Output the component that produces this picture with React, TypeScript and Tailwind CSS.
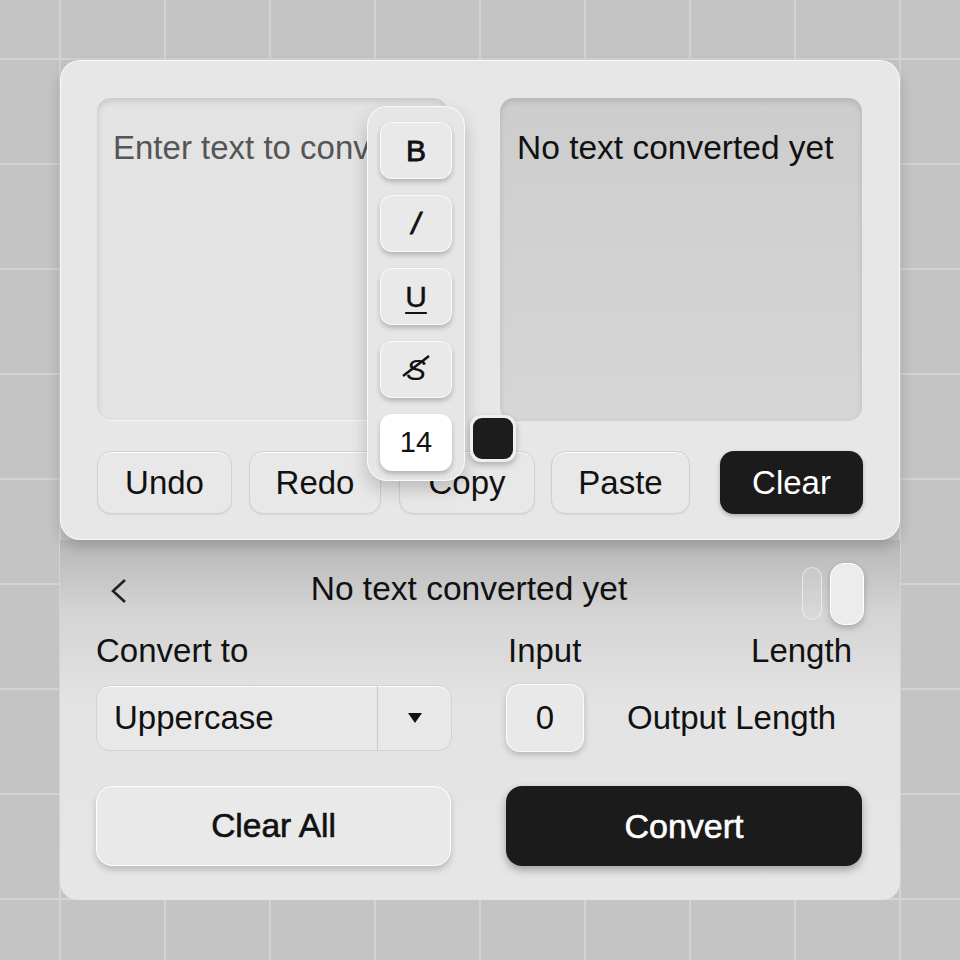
import { useState } from 'react';

const FONT = { fontFamily: '"Liberation Sans", Arial, sans-serif' };

const ACTIONS = [
  { label: 'Undo', w: 'w-[135px]', ml: 'ml-0' },
  { label: 'Redo', w: 'w-[132px]', ml: 'ml-[17px]' },
  { label: 'Copy', w: 'w-[136px]', ml: 'ml-[18px]' },
  { label: 'Paste', w: 'w-[139px]', ml: 'ml-[16px]' },
];

function ToolButton({ children, active }: { children: React.ReactNode; active?: boolean }) {
  return (
    <button
      className={
        'relative flex h-[57px] w-[72px] items-center justify-center rounded-[12px] border border-white/80 text-[30px] text-[#111] shadow-[0_3px_5px_rgba(0,0,0,0.22)] ' +
        (active ? 'bg-white' : 'bg-[#e9e9e9]')
      }
    >
      {children}
    </button>
  );
}

export default function App() {
  const [on, setOn] = useState(true);
  const [mode] = useState('Uppercase');

  return (
    <div
      style={FONT}
      className="h-[960px] w-[960px] overflow-hidden bg-[#c4c4c4] bg-[linear-gradient(to_right,#d3d3d3_2px,transparent_2px),linear-gradient(to_bottom,#d3d3d3_2px,transparent_2px)] bg-[size:105px_105px] bg-[position:59px_58px] px-[60px] pt-[60px]"
    >
      <div className="w-[840px]">
        {/* editor card */}
        <div className="relative z-10 h-[480px] rounded-[20px] border border-white/70 bg-[#e7e7e7] px-[36px] pt-[37px] shadow-[0_6px_14px_rgba(0,0,0,0.18)]">
          <div className="flex gap-[53px]">
            <div className="h-[323px] w-[350px] rounded-[14px] bg-[#e3e3e3] pl-[16px] pt-[30px] text-[33px] leading-[1.2] text-[#555] shadow-[inset_0_3px_6px_rgba(0,0,0,0.13),inset_0_-1px_0_rgba(255,255,255,0.8)]">
              <div className="whitespace-nowrap">Enter text to conv</div>
            </div>
            <div className="h-[323px] w-[362px] rounded-[14px] bg-[linear-gradient(to_bottom,#cdcdcd,#d6d6d6)] pl-[17px] pt-[30px] text-[33.5px] leading-[1.2] text-[#111] shadow-[inset_0_3px_6px_rgba(0,0,0,0.12)]">
              No text converted yet
            </div>
          </div>

          <div className="mt-[30px] flex">
            {ACTIONS.map((a) => (
              <button
                key={a.label}
                className={`${a.w} ${a.ml} h-[63px] rounded-[14px] border-[1.5px] border-[#d0d0d0] bg-[#e8e8e8] text-[33px] text-[#111] shadow-[inset_0_1px_0_rgba(255,255,255,0.9),0_1px_2px_rgba(0,0,0,0.06)]`}
              >
                {a.label}
              </button>
            ))}
            <button className="ml-[30px] h-[63px] w-[143px] rounded-[14px] bg-[#1b1b1b] text-[33px] text-white shadow-[0_2px_4px_rgba(0,0,0,0.25)]">
              Clear
            </button>
          </div>

          {/* floating format toolbar */}
          <div className="absolute left-[306px] top-[45px] flex h-[375px] w-[98px] flex-col gap-[16px] rounded-[20px] border border-white/80 bg-[#e6e6e6] pl-[12px] pt-[15px] shadow-[0_8px_18px_rgba(0,0,0,0.2)]">
            <ToolButton>
              <span className="[-webkit-text-stroke:0.8px_#111]">B</span>
            </ToolButton>
            <ToolButton>
              <span className="italic [-webkit-text-stroke:0.8px_#111]">/</span>
            </ToolButton>
            <ToolButton>
              <span className="underline decoration-2 underline-offset-[5px] [-webkit-text-stroke:0.4px_#111]">U</span>
            </ToolButton>
            <ToolButton>
              <span className="relative italic">
                S
                <svg className="absolute left-[-6px] top-[6px]" width="32" height="26" viewBox="0 0 32 26">
                  <line x1="3" y1="23" x2="29" y2="3" stroke="#111" strokeWidth="2.5" />
                </svg>
              </span>
            </ToolButton>
            <ToolButton active>
              <span className="text-[29px]">14</span>
            </ToolButton>
          </div>

          {/* colour swatch */}
          <div className="absolute left-[409px] top-[354px] h-[47px] w-[46px] rounded-[11px] bg-[#efefef] p-[3px] shadow-[0_3px_6px_rgba(0,0,0,0.25)]">
            <div className="h-full w-full rounded-[9px] bg-[#1c1c1c]" />
          </div>
        </div>

        {/* settings panel */}
        <div className="h-[360px] rounded-b-[18px] bg-[linear-gradient(to_bottom,#b7b7b7_0%,#d4d4d4_20%,#e3e3e3_45%,#e6e6e6_100%)] px-[36px] pt-[22px] text-[#111]">
          <div className="flex h-[63px] items-center">
            <svg className="ml-[14px] -mt-[6px]" width="18" height="26" viewBox="0 0 18 26">
              <polyline points="15,2 3,13 15,24" fill="none" stroke="#222" strokeWidth="2.6" strokeLinejoin="miter" />
            </svg>
            <div className="-mt-[9px] flex-1 pl-[12px] text-center text-[33.5px] leading-none">No text converted yet</div>
            <button
              onClick={() => setOn(!on)}
              className="flex h-[63px] w-[66px] items-center justify-between"
            >
              <span className="ml-[4px] h-[53px] w-[20px] rounded-[10px] border border-white/50 bg-white/10" />
              <span
                className={
                  'h-[62px] w-[34px] rounded-[14px] border border-white bg-[#ececec] shadow-[0_3px_6px_rgba(0,0,0,0.22)] ' +
                  (on ? '' : 'opacity-60')
                }
              />
            </button>
          </div>

          <div className="mt-[7px] flex h-[38px] items-center text-[33px]">
            <div className="w-[412px]">Convert to</div>
            <div className="flex flex-1 justify-between pr-[12px]">
              <span>Input</span>
              <span>Length</span>
            </div>
          </div>

          <div className="mt-[14px] flex items-center">
            <div className="flex h-[66px] w-[356px] items-center rounded-[14px] border-[1.5px] border-[#d2d2d2] bg-[#e8e8e8] shadow-[inset_0_1px_0_rgba(255,255,255,0.9)]">
              <span className="flex-1 pl-[17px] text-[33px]">{mode}</span>
              <span className="flex h-full w-[74px] items-center justify-center border-l border-[#cacaca]">
                <svg width="16" height="12" viewBox="0 0 16 12">
                  <polygon points="1,1 15,1 8,11" fill="#111" />
                </svg>
              </span>
            </div>
            <div className="ml-[54px] flex h-[68px] w-[78px] items-center justify-center rounded-[14px] border border-white/80 bg-[#e9e9e9] text-[33px] shadow-[0_3px_6px_rgba(0,0,0,0.2)]">
              0
            </div>
            <span className="ml-[43px] text-[33px]">Output Length</span>
          </div>

          <div className="mt-[34px] flex gap-[55px]">
            <button className="h-[80px] w-[355px] rounded-[16px] border border-white bg-[#e9e9e9] text-[33.5px] text-[#111] shadow-[0_4px_6px_rgba(0,0,0,0.18)] [-webkit-text-stroke:0.6px_#111]">
              Clear All
            </button>
            <button className="h-[80px] w-[356px] rounded-[16px] bg-[#1b1b1b] text-[34px] text-white shadow-[0_4px_8px_rgba(0,0,0,0.3)] [-webkit-text-stroke:0.6px_#fff]">
              Convert
            </button>
          </div>
        </div>
      </div>
    </div>
  );
}
